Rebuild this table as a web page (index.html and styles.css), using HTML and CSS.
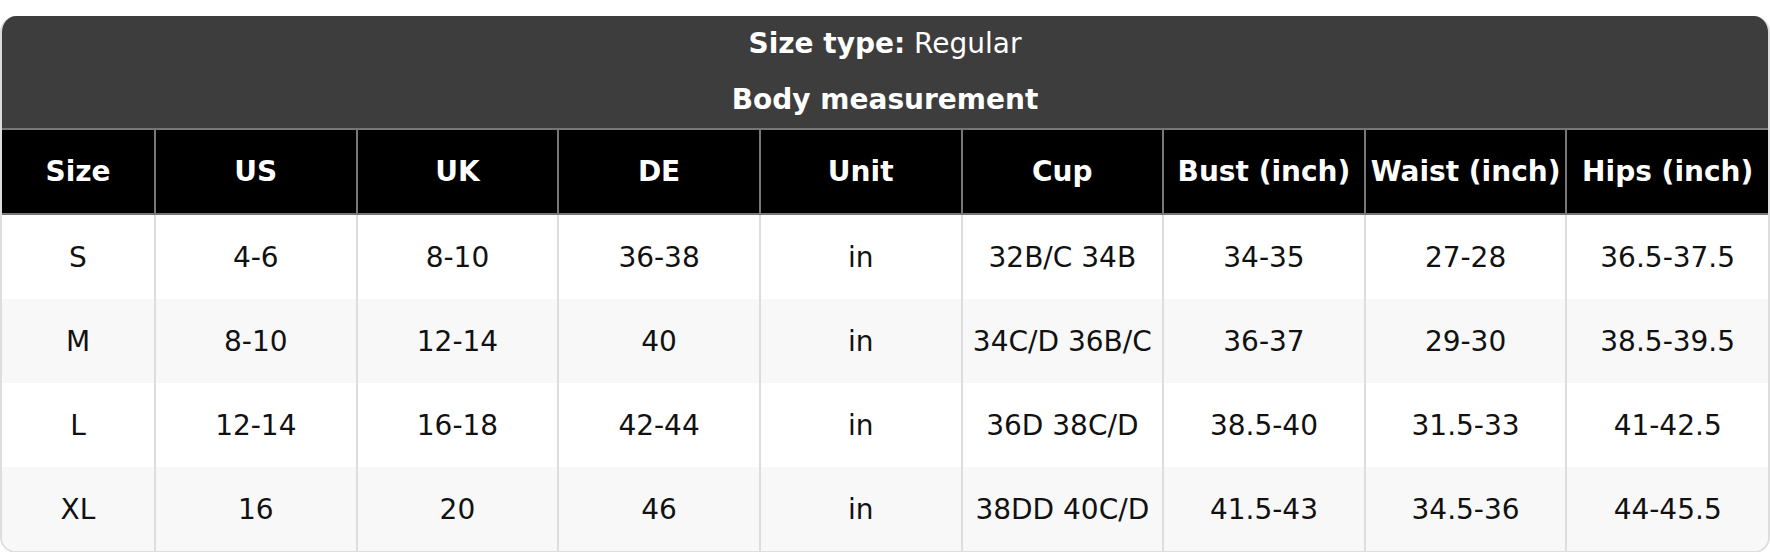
FILE: index.html
```html
<!DOCTYPE html>
<html lang="en">
<head>
<meta charset="utf-8">
<title>Size chart</title>
<link rel="stylesheet" href="styles.css">
</head>
<body>
<div class="chart">
  <div class="title">
    <div class="title-line"><strong>Size type:</strong> Regular</div>
    <div class="title-line"><strong>Body measurement</strong></div>
  </div>
  <table class="sizes">
    <colgroup>
      <col class="col-size">
      <col><col><col><col><col><col><col><col>
    </colgroup>
    <thead>
      <tr>
        <th>Size</th><th>US</th><th>UK</th><th>DE</th><th>Unit</th><th>Cup</th><th>Bust (inch)</th><th>Waist (inch)</th><th>Hips (inch)</th>
      </tr>
    </thead>
    <tbody>
      <tr><td>S</td><td>4-6</td><td>8-10</td><td>36-38</td><td>in</td><td>32B/C 34B</td><td>34-35</td><td>27-28</td><td>36.5-37.5</td></tr>
      <tr><td>M</td><td>8-10</td><td>12-14</td><td>40</td><td>in</td><td>34C/D 36B/C</td><td>36-37</td><td>29-30</td><td>38.5-39.5</td></tr>
      <tr><td>L</td><td>12-14</td><td>16-18</td><td>42-44</td><td>in</td><td>36D 38C/D</td><td>38.5-40</td><td>31.5-33</td><td>41-42.5</td></tr>
      <tr><td>XL</td><td>16</td><td>20</td><td>46</td><td>in</td><td>38DD 40C/D</td><td>41.5-43</td><td>34.5-36</td><td>44-45.5</td></tr>
    </tbody>
  </table>
</div>
</body>
</html>
```
FILE: styles.css
```css
html, body {
  margin: 0;
  padding: 0;
  background: #ffffff;
}

body {
  padding-top: 16px;
  font-family: "DejaVu Sans", Verdana, sans-serif;
  color: #111111;
}

.chart {
  border: 2px solid #dddddd;
  border-top: 0;
  border-radius: 16px;
  overflow: hidden;
}

.title {
  background: #3d3d3d;
  color: #ffffff;
  text-align: center;
  font-size: 28px;
  padding-bottom: 0;
  margin: 0 -2px;
  border-bottom: 2px solid #777777;
}

.title-line {
  height: 56px;
  line-height: 56px;
}

.title strong {
  font-weight: bold;
}

.sizes {
  width: 100%;
  border-collapse: collapse;
  table-layout: fixed;
  border-style: hidden;
  font-size: 28px;
}

.col-size {
  width: 153px;
}

.sizes th {
  background: #000000;
  color: #ffffff;
  font-weight: bold;
  height: 83px;
  padding: 0;
  border: 2px solid #777777;
  border-top: 0;
  text-align: center;
  white-space: nowrap;
}

.sizes td {
  height: 84px;
  padding: 0;
  border: 2px solid #dddddd;
  border-top: 0;
  border-bottom: 0;
  text-align: center;
  white-space: nowrap;
  color: #111111;
}

.sizes tbody tr:nth-child(even) td {
  background: #f8f8f8;
}
```
